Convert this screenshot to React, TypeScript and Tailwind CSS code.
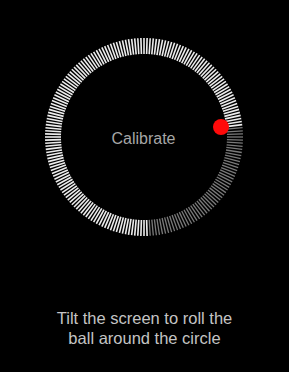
import React from "react";

const N = 200;
const C = 99;
const R_OUT = 99;
const R_IN = 83;

function Ticks() {
  const lines = [];
  for (let i = 0; i < N; i++) {
    const deg = (i * 360) / N;
    const a = (deg * Math.PI) / 180;
    const sx = Math.sin(a);
    const sy = -Math.cos(a);
    const dim = deg > 83 && deg < 177;
    lines.push(
      <line
        key={i}
        x1={C + sx * R_IN}
        y1={C + sy * R_IN}
        x2={C + sx * R_OUT}
        y2={C + sy * R_OUT}
        stroke={dim ? "#7a7a7a" : "#ececec"}
        strokeWidth={dim ? 1.3 : 1.6}
      />
    );
  }
  return (
    <svg width="198" height="198" viewBox="0 0 198 198" className="block">
      {lines}
    </svg>
  );
}

export default function App() {
  return (
    <div
      className="w-[289px] h-[372px] bg-black flex flex-col items-center overflow-hidden"
      style={{ fontFamily: "'Liberation Sans', Arial, sans-serif" }}
    >
      <div className="relative w-[198px] h-[198px] mt-[38px] mr-[2px]">
        <Ticks />
        <div className="absolute inset-0 pt-[4px] flex items-center justify-center text-[16px] text-[#a6a6a6]">
          Calibrate
        </div>
        <div className="absolute left-[168px] top-[81px] w-[16px] h-[16px] rounded-full bg-[#ff0a0a]" />
      </div>
      <div className="mt-[72px] text-center text-[16.5px] leading-[20px] text-[#c4c4c4]">
        Tilt the screen to roll the
        <br />
        ball around the circle
      </div>
    </div>
  );
}
